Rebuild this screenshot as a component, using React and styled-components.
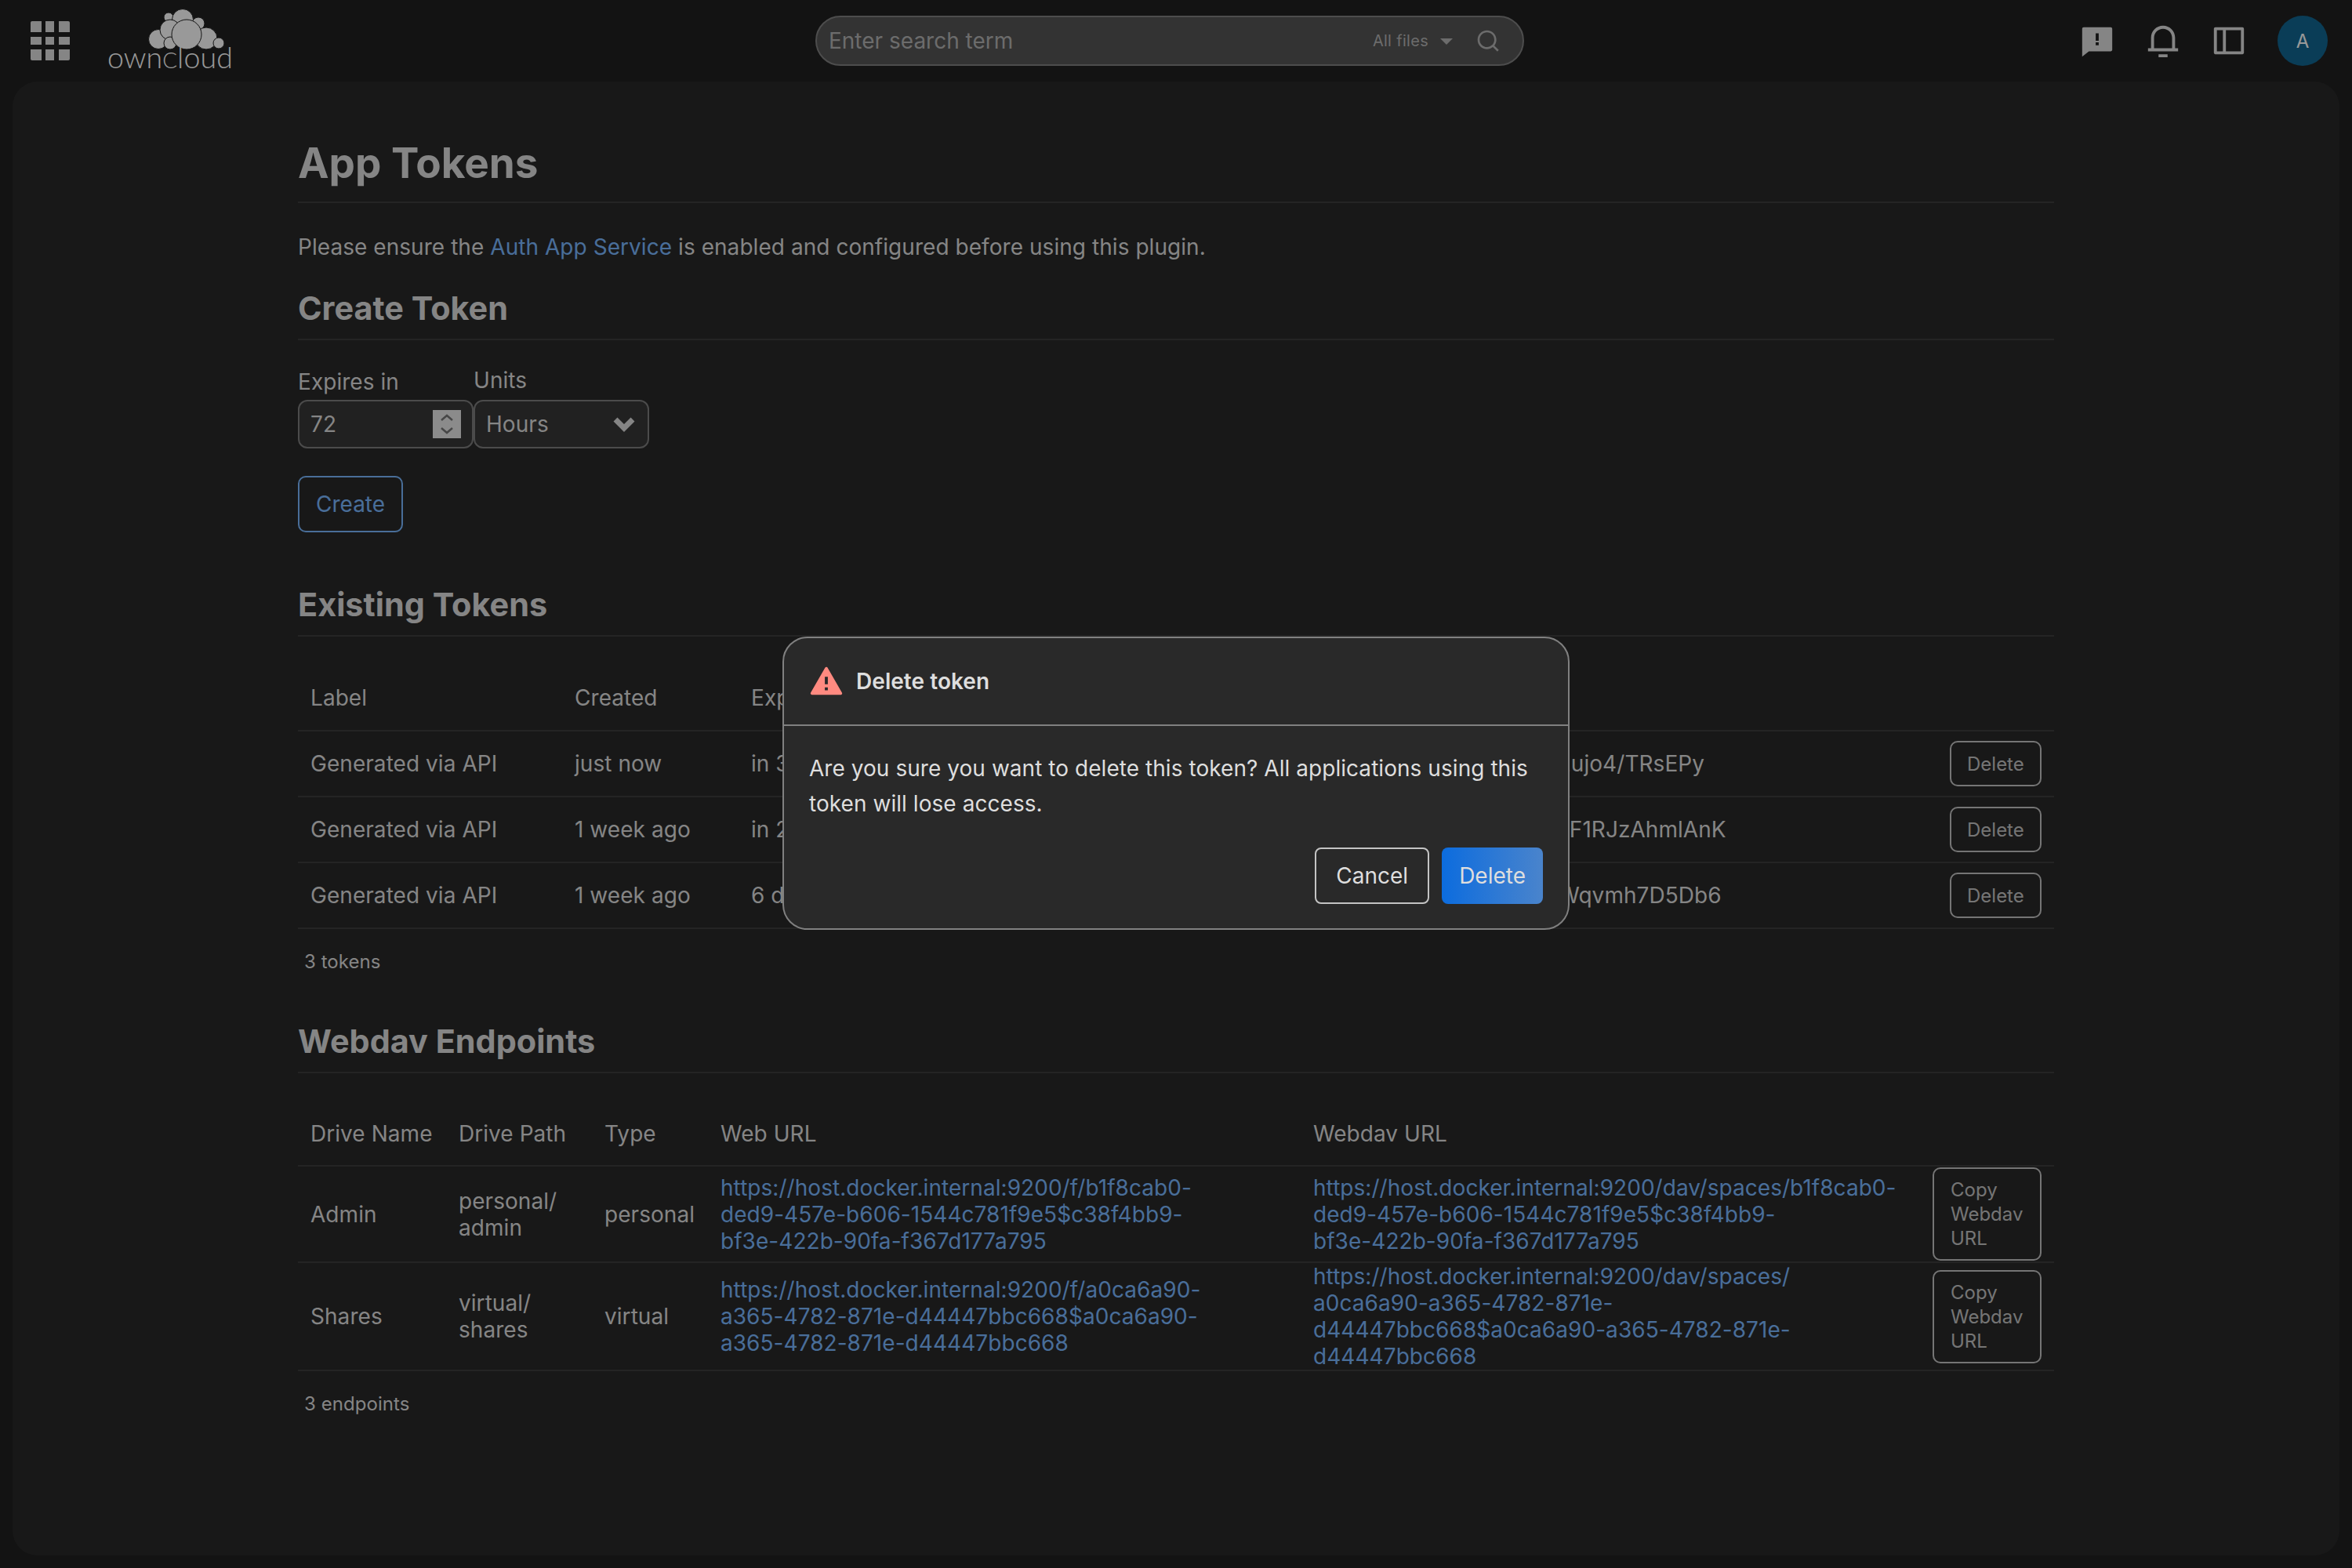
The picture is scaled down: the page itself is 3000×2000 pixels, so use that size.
import React from 'react';
import styled, { createGlobalStyle } from 'styled-components';
import {
  RiAlertFill,
  RiFeedbackFill,
  RiNotification3Line,
  RiSearchLine,
  RiSideBarLine,
} from 'react-icons/ri';

const GlobalStyle = createGlobalStyle`
  * {
    box-sizing: border-box;
  }

  html, body {
    margin: 0;
    height: 100%;
    background: #212121;
    color: #dedede;
    font-family: Inter, "Liberation Sans", sans-serif;
    font-size: 28px;
    letter-spacing: 0.05px;
  }
`;

const Page = styled.div`
  display: flex;
  flex-direction: column;
  height: 100vh;
  overflow: hidden;
`;

const Topbar = styled.header`
  display: grid;
  grid-template-columns: 1001px 904px 1fr;
  align-items: center;
  height: 104px;
  flex: none;
  padding: 0 31px 0 39px;
`;

const Brand = styled.div`
  display: flex;
  align-items: center;
  gap: 48px;
`;

const LogoMark = styled.svg`
  margin-bottom: -8px;
`;

const SearchBar = styled.div`
  display: flex;
  align-items: center;
  height: 64px;
  margin-top: -1px;
  padding: 0 28px 0 15px;
  background: #555;
  border: 2px solid #808080;
  border-radius: 32px;
  color: #b4b4b4;
`;

const SearchInput = styled.input`
  flex: 1;
  min-width: 0;
  background: none;
  border: none;
  outline: none;
  padding: 0;
  color: #dedede;
  font: inherit;

  &::placeholder {
    color: #b4b4b4;
    opacity: 1;
  }
`;

const FilterLabel = styled.span`
  font-size: 20px;
  letter-spacing: 0.3px;
`;

const FilterCaret = styled.span`
  width: 0;
  height: 0;
  margin: 2px 29px 0 15px;
  border-left: 8px solid transparent;
  border-right: 8px solid transparent;
  border-top: 8px solid currentColor;
`;

const TopActions = styled.div`
  display: flex;
  align-items: center;
  justify-content: flex-end;
  color: #dedede;
`;

const IconButton = styled.span`
  display: flex;
  width: 46px;
  height: 46px;
  margin-right: 38px;
  font-size: 46px;
`;

const Avatar = styled.span`
  display: flex;
  align-items: center;
  justify-content: center;
  width: 64px;
  height: 64px;
  margin-left: 1px;
  border-radius: 50%;
  background: #116691;
  color: #fff;
  font-size: 24px;
`;

const Panel = styled.main`
  flex: 1;
  margin: 0 16px 16px;
  padding-top: 71px;
  background: #292929;
  border-radius: 32px;
`;

const Content = styled.div`
  width: 2240px;
  margin: 0 auto;
`;

const PageTitle = styled.h1`
  margin: 0;
  padding-bottom: 15px;
  border-bottom: 2px solid #3d3d3d;
  font-size: 53px;
  font-weight: 700;
  line-height: 67px;
  letter-spacing: 0;
`;

const SectionTitle = styled.h2`
  margin: ${(p) => p.$top}px 0 0;
  padding-bottom: 12px;
  border-bottom: 2px solid #3d3d3d;
  font-size: 41.4px;
  font-weight: 700;
  line-height: 53px;
  letter-spacing: 0;
`;

const Intro = styled.p`
  margin: 35px 0 0;
  line-height: 42px;
`;

const Link = styled.a`
  color: #7bb8ff;
  text-decoration: none;
  white-space: pre-line;
`;

const FormRow = styled.div`
  display: flex;
  align-items: flex-end;
  margin-top: 30px;
`;

const Field = styled.div`
  display: flex;
  flex-direction: column;
  width: ${(p) => p.$width}px;
`;

const FieldLabel = styled.label`
  line-height: 42px;
  margin-bottom: ${(p) => p.$gap}px;
`;

const FieldBox = styled.div`
  display: flex;
  align-items: center;
  justify-content: space-between;
  height: ${(p) => p.$height}px;
  padding: 0 14px;
  background: #383838;
  border: 2px solid #7d7d7d;
  border-radius: 12px;
`;

const Spinner = styled.span`
  display: flex;
  width: 36px;
  height: 36px;
  background: #e8e8e8;
  color: #777;
`;

const ChevronIcon = styled.svg`
  margin-right: 2px;
`;

const OutlineButton = styled.button`
  display: block;
  height: 72px;
  margin-top: 35px;
  padding: 0 21px;
  background: none;
  border: 2px solid #7bb8ff;
  border-radius: 10px;
  color: #7bb8ff;
  font: inherit;
`;

const Table = styled.table`
  width: 100%;
  margin-top: ${(p) => p.$top}px;
  border-collapse: collapse;
  table-layout: fixed;
`;

const HeadCell = styled.th`
  height: ${(p) => p.$height}px;
  padding: 0 16px;
  border-bottom: 2px solid #3d3d3d;
  font-weight: 400;
  text-align: left;
  white-space: nowrap;
`;

const Row = styled.tr`
  border-bottom: 2px solid #3d3d3d;
`;

const Cell = styled.td`
  height: 84px;
  padding: 0 16px;
  line-height: 34px;
  white-space: ${(p) => (p.$nowrap ? 'nowrap' : 'pre-line')};
`;

const SmallButton = styled.button`
  display: block;
  width: ${(p) => p.$width}px;
  height: ${(p) => p.$height}px;
  margin: 1px 0 1px auto;
  padding: 0 ${(p) => p.$pad}px;
  background: none;
  border: 2px solid #c4c4c4;
  border-radius: 10px;
  color: #c4c4c4;
  font: inherit;
  font-size: 24px;
  line-height: 31px;
  text-align: left;
`;

const Count = styled.div`
  margin: 24px 0 0 8px;
  font-size: 24px;
  line-height: 36px;
`;

const Overlay = styled.div`
  position: fixed;
  inset: 0;
  display: flex;
  align-items: center;
  justify-content: center;
  padding-bottom: 2px;
  background: rgba(0, 0, 0, 0.4);
`;

const Modal = styled.div`
  width: 1004px;
  background: #292929;
  border: 2px solid #808080;
  border-radius: 32px;
`;

const ModalHead = styled.div`
  display: flex;
  align-items: center;
  gap: 15px;
  height: 112px;
  padding: 0 0 0 31px;
  border-bottom: 2px solid #808080;
  font-weight: 600;
`;

const AlertIcon = styled.span`
  display: flex;
  color: #ff8a80;
  font-size: 46px;
`;

const ModalBody = styled.div`
  padding: 32px 32px 31px 32px;
  line-height: 45px;
`;

const ModalActions = styled.div`
  display: flex;
  justify-content: flex-end;
  gap: 16px;
  margin-top: 33px;
`;

const ModalButton = styled.button`
  height: 72px;
  padding: 0 ${(p) => (p.$primary ? 22 : 25)}px;
  background: ${(p) => (p.$primary ? 'linear-gradient(90deg, #0c6cde, #4a84cc)' : 'none')};
  border: ${(p) => (p.$primary ? 'none' : '2px solid #c4c4c4')};
  border-radius: 8px;
  color: #dedede;
  font: inherit;
`;

const tokens = [
  { created: 'just now', expires: 'in 3 days', token: 'Zk8pQeWnfbXaT2ujo4/TRsEPy' },
  { created: '1 week ago', expires: 'in 2 days', token: 'Lm4rVt9cHyG7sDF1RJzAhmlAnK' },
  { created: '1 week ago', expires: '6 days ago', token: 'Bn3xKf6uYwP0qWqvmh7D5Db6' },
];

const endpoints = [
  {
    name: 'Admin',
    path: 'personal/\nadmin',
    type: 'personal',
    web: 'https://host.docker.internal:9200/f/b1f8cab0-\nded9-457e-b606-1544c781f9e5$c38f4bb9-\nbf3e-422b-90fa-f367d177a795',
    dav: 'https://host.docker.internal:9200/dav/spaces/b1f8cab0-\nded9-457e-b606-1544c781f9e5$c38f4bb9-\nbf3e-422b-90fa-f367d177a795',
  },
  {
    name: 'Shares',
    path: 'virtual/\nshares',
    type: 'virtual',
    web: 'https://host.docker.internal:9200/f/a0ca6a90-\na365-4782-871e-d44447bbc668$a0ca6a90-\na365-4782-871e-d44447bbc668',
    dav: 'https://host.docker.internal:9200/dav/spaces/\na0ca6a90-a365-4782-871e-\nd44447bbc668$a0ca6a90-a365-4782-871e-\nd44447bbc668',
  },
];

const GridIcon = () => (
  <svg width="50" height="50" viewBox="0 0 50 50" fill="#dedede">
    <path d="M2 0h12v14H0V2a2 2 0 0 1 2-2z" />
    <rect x="19" y="0" width="11" height="14" />
    <path d="M36 0h12a2 2 0 0 1 2 2v12H36z" />
    <rect x="0" y="20" width="14" height="10" />
    <rect x="19" y="20" width="11" height="10" />
    <rect x="36" y="20" width="14" height="10" />
    <path d="M0 36h14v14H2a2 2 0 0 1-2-2z" />
    <rect x="19" y="36" width="11" height="14" />
    <path d="M36 36h14v12a2 2 0 0 1-2 2H36z" />
  </svg>
);

const cloud = [
  [78, 12, 6], [96, 15, 13.5], [116, 20, 8], [65, 40, 12.5], [80, 28, 13],
  [126, 39, 14], [142, 45, 7], [80, 45, 8], [101, 34, 19],
];

const Logo = () => (
  <LogoMark width="164" height="92" viewBox="0 0 164 92">
    {cloud.map(([cx, cy, r]) => (
      <circle key={`${cx}-${cy}`} cx={cx} cy={cy} r={r} fill="#fff" stroke="#212121" strokeWidth="1" />
    ))}
    <text
      x="0"
      y="77"
      fill="#fff"
      fontFamily="Lato, sans-serif"
      fontWeight="300"
      fontSize="38"
      textLength="160"
      lengthAdjust="spacingAndGlyphs"
    >
      own<tspan fontSize="28">C</tspan>loud
    </text>
  </LogoMark>
);

const SpinnerArrows = () => (
  <svg width="36" height="36" viewBox="0 0 36 36" fill="none" stroke="currentColor" strokeWidth="2.5">
    <path d="M11 13l7-6 7 6M11 23l7 6 7-6" />
  </svg>
);

const Chevron = () => (
  <ChevronIcon width="28" height="20" viewBox="0 0 28 20" fill="none" stroke="#dedede" strokeWidth="7">
    <path d="M3 4l11 11L25 4" />
  </ChevronIcon>
);

const App = () => (
  <Page>
    <GlobalStyle />
    <Topbar>
      <Brand>
        <GridIcon />
        <Logo />
      </Brand>
      <SearchBar>
        <SearchInput placeholder="Enter search term" />
        <FilterLabel>All files</FilterLabel>
        <FilterCaret />
        <RiSearchLine size={32} />
      </SearchBar>
      <TopActions>
        <IconButton><RiFeedbackFill /></IconButton>
        <IconButton><RiNotification3Line /></IconButton>
        <IconButton><RiSideBarLine /></IconButton>
        <Avatar>A</Avatar>
      </TopActions>
    </Topbar>

    <Panel>
      <Content>
        <PageTitle>App Tokens</PageTitle>
        <Intro>
          Please ensure the <Link href="#">Auth App Service</Link> is enabled and configured before using this plugin.
        </Intro>

        <SectionTitle $top={31}>Create Token</SectionTitle>
        <FormRow>
          <Field $width={224}>
            <FieldLabel $gap={2}>Expires in</FieldLabel>
            <FieldBox $height={62}>
              72
              <Spinner><SpinnerArrows /></Spinner>
            </FieldBox>
          </Field>
          <Field $width={224}>
            <FieldLabel $gap={4}>Units</FieldLabel>
            <FieldBox $height={62}>
              Hours
              <Chevron />
            </FieldBox>
          </Field>
        </FormRow>
        <OutlineButton>Create</OutlineButton>

        <SectionTitle $top={66}>Existing Tokens</SectionTitle>
        <Table $top={36}>
          <colgroup>
            <col style={{ width: 337 }} />
            <col style={{ width: 225 }} />
            <col style={{ width: 805 }} />
            <col style={{ width: 708 }} />
            <col />
          </colgroup>
          <thead>
            <tr>
              <HeadCell $height={84}>Label</HeadCell>
              <HeadCell>Created</HeadCell>
              <HeadCell>Expires</HeadCell>
              <HeadCell>Token</HeadCell>
              <HeadCell />
            </tr>
          </thead>
          <tbody>
            {tokens.map((item) => (
              <Row key={item.token}>
                <Cell $nowrap>Generated via API</Cell>
                <Cell $nowrap>{item.created}</Cell>
                <Cell $nowrap>{item.expires}</Cell>
                <Cell $nowrap>{item.token}</Cell>
                <Cell><SmallButton $width={117} $height={58} $pad={20}>Delete</SmallButton></Cell>
              </Row>
            ))}
          </tbody>
        </Table>
        <Count>3 tokens</Count>

        <SectionTitle $top={57}>Webdav Endpoints</SectionTitle>
        <Table $top={36}>
          <colgroup>
            <col style={{ width: 189 }} />
            <col style={{ width: 186 }} />
            <col style={{ width: 148 }} />
            <col style={{ width: 756 }} />
            <col style={{ width: 788 }} />
            <col />
          </colgroup>
          <thead>
            <tr>
              <HeadCell $height={82}>Drive Name</HeadCell>
              <HeadCell>Drive Path</HeadCell>
              <HeadCell>Type</HeadCell>
              <HeadCell>Web URL</HeadCell>
              <HeadCell>Webdav URL</HeadCell>
              <HeadCell />
            </tr>
          </thead>
          <tbody>
            {endpoints.map((item) => (
              <Row key={item.name}>
                <Cell>{item.name}</Cell>
                <Cell>{item.path}</Cell>
                <Cell>{item.type}</Cell>
                <Cell><Link href="#">{item.web}</Link></Cell>
                <Cell><Link href="#">{item.dav}</Link></Cell>
                <Cell><SmallButton $width={139} $height={119} $pad={21}>Copy Webdav URL</SmallButton></Cell>
              </Row>
            ))}
          </tbody>
        </Table>
        <Count>3 endpoints</Count>
      </Content>
    </Panel>

    <Overlay>
      <Modal>
        <ModalHead>
          <AlertIcon><RiAlertFill /></AlertIcon>
          Delete token
        </ModalHead>
        <ModalBody>
          Are you sure you want to delete this token? All applications using this token will lose access.
          <ModalActions>
            <ModalButton>Cancel</ModalButton>
            <ModalButton $primary>Delete</ModalButton>
          </ModalActions>
        </ModalBody>
      </Modal>
    </Overlay>
  </Page>
);

export default App;
